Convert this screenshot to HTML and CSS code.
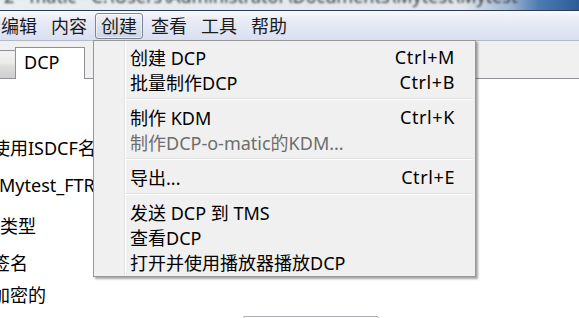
FILE: index.html
```html
<!DOCTYPE html>
<html lang="zh-CN">
<head>
<meta charset="utf-8">
<title>DCP-o-matic</title>
<link rel="stylesheet" href="styles.css">
</head>
<body>
<div class="window">
  <div class="titlebar"><span class="title">2 - matic - C:\Users\Administrator\Documents\Mytest\Mytest</span></div>
  <div class="menubar">
    <div class="menus">
      <span class="mi">编辑</span>
      <span class="mi">内容</span>
      <span class="mi hot">创建</span>
      <span class="mi">查看</span>
      <span class="mi">工具</span>
      <span class="mi">帮助</span>
    </div>
  </div>
  <div class="tabstrip">
    <div class="tab inactive"></div>
    <div class="tab active">DCP</div>
    <div class="tabfill"></div>
  </div>
  <div class="panel">
    <div class="row r1"><span class="lbl cut">使用ISDCF名称</span></div>
    <div class="row r2"><span class="lbl">Mytest_FTR-F-XX-XX_2K_20190101_SMPTE_OV</span></div>
    <div class="row r3"><span class="lbl">类型</span></div>
    <div class="row r4"><span class="lbl cut">签名</span></div>
    <div class="row r5"><span class="lbl cut">加密的</span></div>
    <div class="inputrow"><div class="input"></div></div>
  </div>

  <div class="dropdown">
    <div class="item"><span class="txt">创建 DCP</span><span class="key">Ctrl+M</span></div>
    <div class="item"><span class="txt">批量制作DCP</span><span class="key">Ctrl+B</span></div>
    <div class="sep"></div>
    <div class="item"><span class="txt">制作 KDM</span><span class="key">Ctrl+K</span></div>
    <div class="item disabled"><span class="txt">制作DCP-o-matic的KDM...</span><span class="key"></span></div>
    <div class="sep"></div>
    <div class="item"><span class="txt">导出...</span><span class="key">Ctrl+E</span></div>
    <div class="sep"></div>
    <div class="item"><span class="txt">发送 DCP 到 TMS</span><span class="key"></span></div>
    <div class="item"><span class="txt">查看DCP</span><span class="key"></span></div>
    <div class="item"><span class="txt">打开并使用播放器播放DCP</span><span class="key"></span></div>
  </div>
</div>
</body>
</html>
```

FILE: styles.css
```css
* { box-sizing: border-box; }

html, body {
  margin: 0;
  padding: 0;
  width: 579px;
  height: 318px;
  overflow: hidden;
  background: #ffffff;
}

body {
  font-family: "Noto Sans", "Noto Sans CJK SC", sans-serif;
  font-size: 18px;
  color: #000;
}

.window {
  position: relative;
  width: 579px;
  height: 318px;
  overflow: hidden;
  display: flex;
  flex-direction: column;
}

/* title bar (only its lower edge is visible) */
.titlebar {
  height: 11px;
  flex: none;
  overflow: hidden;
  background: linear-gradient(to right, #e9eef4 0%, #dfe6ee 80%, #9fb6d4 88%, #4d7bb2 93%, #2d5b95 100%);
  border-bottom: 1px solid #2b3b50;
}

.title {
  display: block;
  white-space: nowrap;
  margin-top: -16px;
  margin-left: 4px;
  line-height: 24px;
  font-size: 18px;
  color: #3a3a3a;
  filter: blur(0.8px);
}

/* menu bar */
.menubar {
  height: 30px;
  flex: none;
  background: linear-gradient(to bottom, #f8f9fc 0%, #e8ebf6 35%, #dadff0 100%);
  border-bottom: 1px solid #b3b9c9;
}

.menus {
  display: flex;
  align-items: flex-start;
  margin-left: -6px;
  padding-top: 2px;
}

.mi {
  margin: 0 1px;
  padding: 0 5px;
  height: 26px;
  line-height: 25px;
  border: 1px solid transparent;
  border-radius: 3px;
  color: #1b1b1b;
  white-space: nowrap;
}

.mi.hot {
  border-color: #7d8799;
  background: linear-gradient(to bottom, #eef1f7 0%, #dfe4ee 45%, #cdd4e2 100%);
  box-shadow: inset 0 0 0 1px rgba(255,255,255,0.5);
}

/* tabs */
.tabstrip {
  height: 38px;
  flex: none;
  background: #f0f0f0;
  display: flex;
  align-items: flex-end;
}

.tab {
  flex: none;
}

.tab.inactive {
  width: 15px;
  height: 29px;
  border: 1px solid #8e9297;
  border-left: none;
  border-right: none;
  background: linear-gradient(to bottom, #f2f2f2 0%, #ebebeb 45%, #dddddd 55%, #cfcfcf 100%);
}

.tab.active {
  width: 70px;
  height: 32px;
  border: 1px solid #8e9297;
  border-bottom: none;
  background: #ffffff;
  padding-left: 8px;
  line-height: 28px;
  color: #000;
}

.tabfill {
  flex: 1;
  height: 1px;
  background: #8e9297;
}

/* panel */
.panel {
  flex: 1;
  background: #ffffff;
  display: flex;
  flex-direction: column;
  padding-top: 57px;
}

.row {
  height: 24px;
  line-height: 24px;
  white-space: nowrap;
  width: 93px;
  overflow: hidden;
}

.lbl { display: inline-block; }
.lbl.cut { margin-left: -8px; }

.r2 { margin-top: 13px; }
.r2 .lbl { margin-left: -1px; }
.r3 { margin-top: 17px; }
.r4 { margin-top: 13px; }
.r5 { margin-top: 8px; }

.inputrow {
  margin-top: 9px;
  padding-left: 243px;
}

.input {
  width: 136px;
  height: 28px;
  border: 1px solid #abadb3;
  border-radius: 2px;
}

/* dropdown menu */
.dropdown {
  position: absolute;
  left: 93px;
  top: 40px;
  width: 383px;
  height: 237px;
  border: 1px solid #979797;
  background-color: #f0f0f0;
  background-image: linear-gradient(to right, transparent 0, transparent 30px, #e2e3e3 30px, #e2e3e3 31px, #ffffff 31px, #ffffff 32px, transparent 32px);
  box-shadow: 2px 2px 2px rgba(0, 0, 0, 0.35);
  padding: 3px 0 2px 0;
  display: flex;
  flex-direction: column;
}

.item {
  height: 25px;
  display: flex;
  align-items: center;
  justify-content: space-between;
  padding-left: 36px;
  padding-right: 20px;
  white-space: nowrap;
  color: #000;
}

.item.disabled { color: #6d6d6d; }

.key {
  letter-spacing: 0.6px;
}

.sep {
  height: 10px;
  margin-left: 32px;
  margin-right: 2px;
  background: linear-gradient(to bottom, transparent 0, transparent 4px, #e0e0e0 4px, #e0e0e0 5px, #ffffff 5px, #ffffff 6px, transparent 6px);
}
```
